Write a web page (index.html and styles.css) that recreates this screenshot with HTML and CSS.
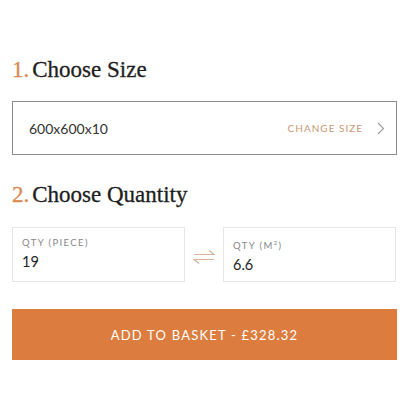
FILE: index.html
```html
<!DOCTYPE html>
<html>
<head>
<meta charset="utf-8">
<link rel="stylesheet" href="styles.css">
</head>
<body>
<div class="page">
  <h2 class="step-title"><span class="num">1.</span>Choose Size</h2>
  <div class="size-box">
    <span class="size-value">600x600x10</span>
    <span class="change">CHANGE SIZE</span>
    <svg class="chev" width="8" height="13" viewBox="0 0 8 13"><path d="M1 1 L6.5 6.5 L1 12" fill="none" stroke="#9a9a9a" stroke-width="1.1"/></svg>
  </div>
  <h2 class="step-title second"><span class="num">2.</span>Choose Quantity</h2>
  <div class="qty-row">
    <div class="qty-box">
      <div class="qty-label">QTY (PIECE)</div>
      <div class="qty-value">19</div>
    </div>
    <div class="swap">
      <svg width="22" height="14" viewBox="0 0 22 14"><path d="M1 4.5 H21 L16 0.5 M21 9.5 H1 L6 13.5" fill="none" stroke="#d9b397" stroke-width="1.2"/></svg>
    </div>
    <div class="qty-box">
      <div class="qty-label">QTY (M<sup>2</sup>)</div>
      <div class="qty-value">6.6</div>
    </div>
  </div>
  <button class="basket">ADD TO BASKET - £328.32</button>
</div>
</body>
</html>
```
FILE: styles.css
```css
html, body { margin: 0; padding: 0; background: #fff; }
.page {
  width: 385px;
  padding: 56px 0 0 12px;
  font-family: "Lato", "Open Sans", sans-serif;
}
.step-title {
  margin: 0;
  font-family: "Liberation Serif", serif;
  font-weight: normal;
  font-size: 23px;
  line-height: 28px;
  color: #1e1e1e;
  -webkit-text-stroke: 0.3px #1e1e1e;
}
.step-title .num {
  color: #d98a52;
  -webkit-text-stroke: 0.3px #d98a52;
  margin-right: 3px;
}
.step-title.second { margin-top: 26px; }
.size-box {
  margin-top: 17px;
  height: 52px;
  border: 1px solid #8c8c8c;
  display: flex;
  align-items: center;
  padding: 0 11px 0 16px;
}
.size-value { font-size: 14px; color: #333; flex: 1; }
.change { font-size: 10px; letter-spacing: 1px; color: #c99874; margin-right: 14px; }
.chev { display: block; }
.qty-row {
  margin-top: 18px;
  display: flex;
  align-items: stretch;
}
.qty-box {
  width: 173px;
  height: 55px;
  border: 1px solid #e6e6e6;
  padding: 9px 0 0 9px;
  box-sizing: border-box;
}
.swap {
  width: 38px;
  display: flex;
  align-items: center;
  justify-content: center;
  padding-top: 4px;
}
.qty-label { font-size: 9.5px; letter-spacing: 1.4px; color: #888; line-height: 12px; }
.qty-label sup { font-size: 6px; }
.qty-value { font-size: 14.5px; color: #1e1e1e; margin-top: 4px; line-height: 18px; }
.basket {
  display: block;
  margin-top: 27px;
  width: 385px;
  height: 51px;
  border: none;
  background: #dc7d3f;
  color: #fff;
  font-family: "Lato", sans-serif;
  font-size: 13px;
  letter-spacing: 1.2px;
  padding: 0;
}
```
